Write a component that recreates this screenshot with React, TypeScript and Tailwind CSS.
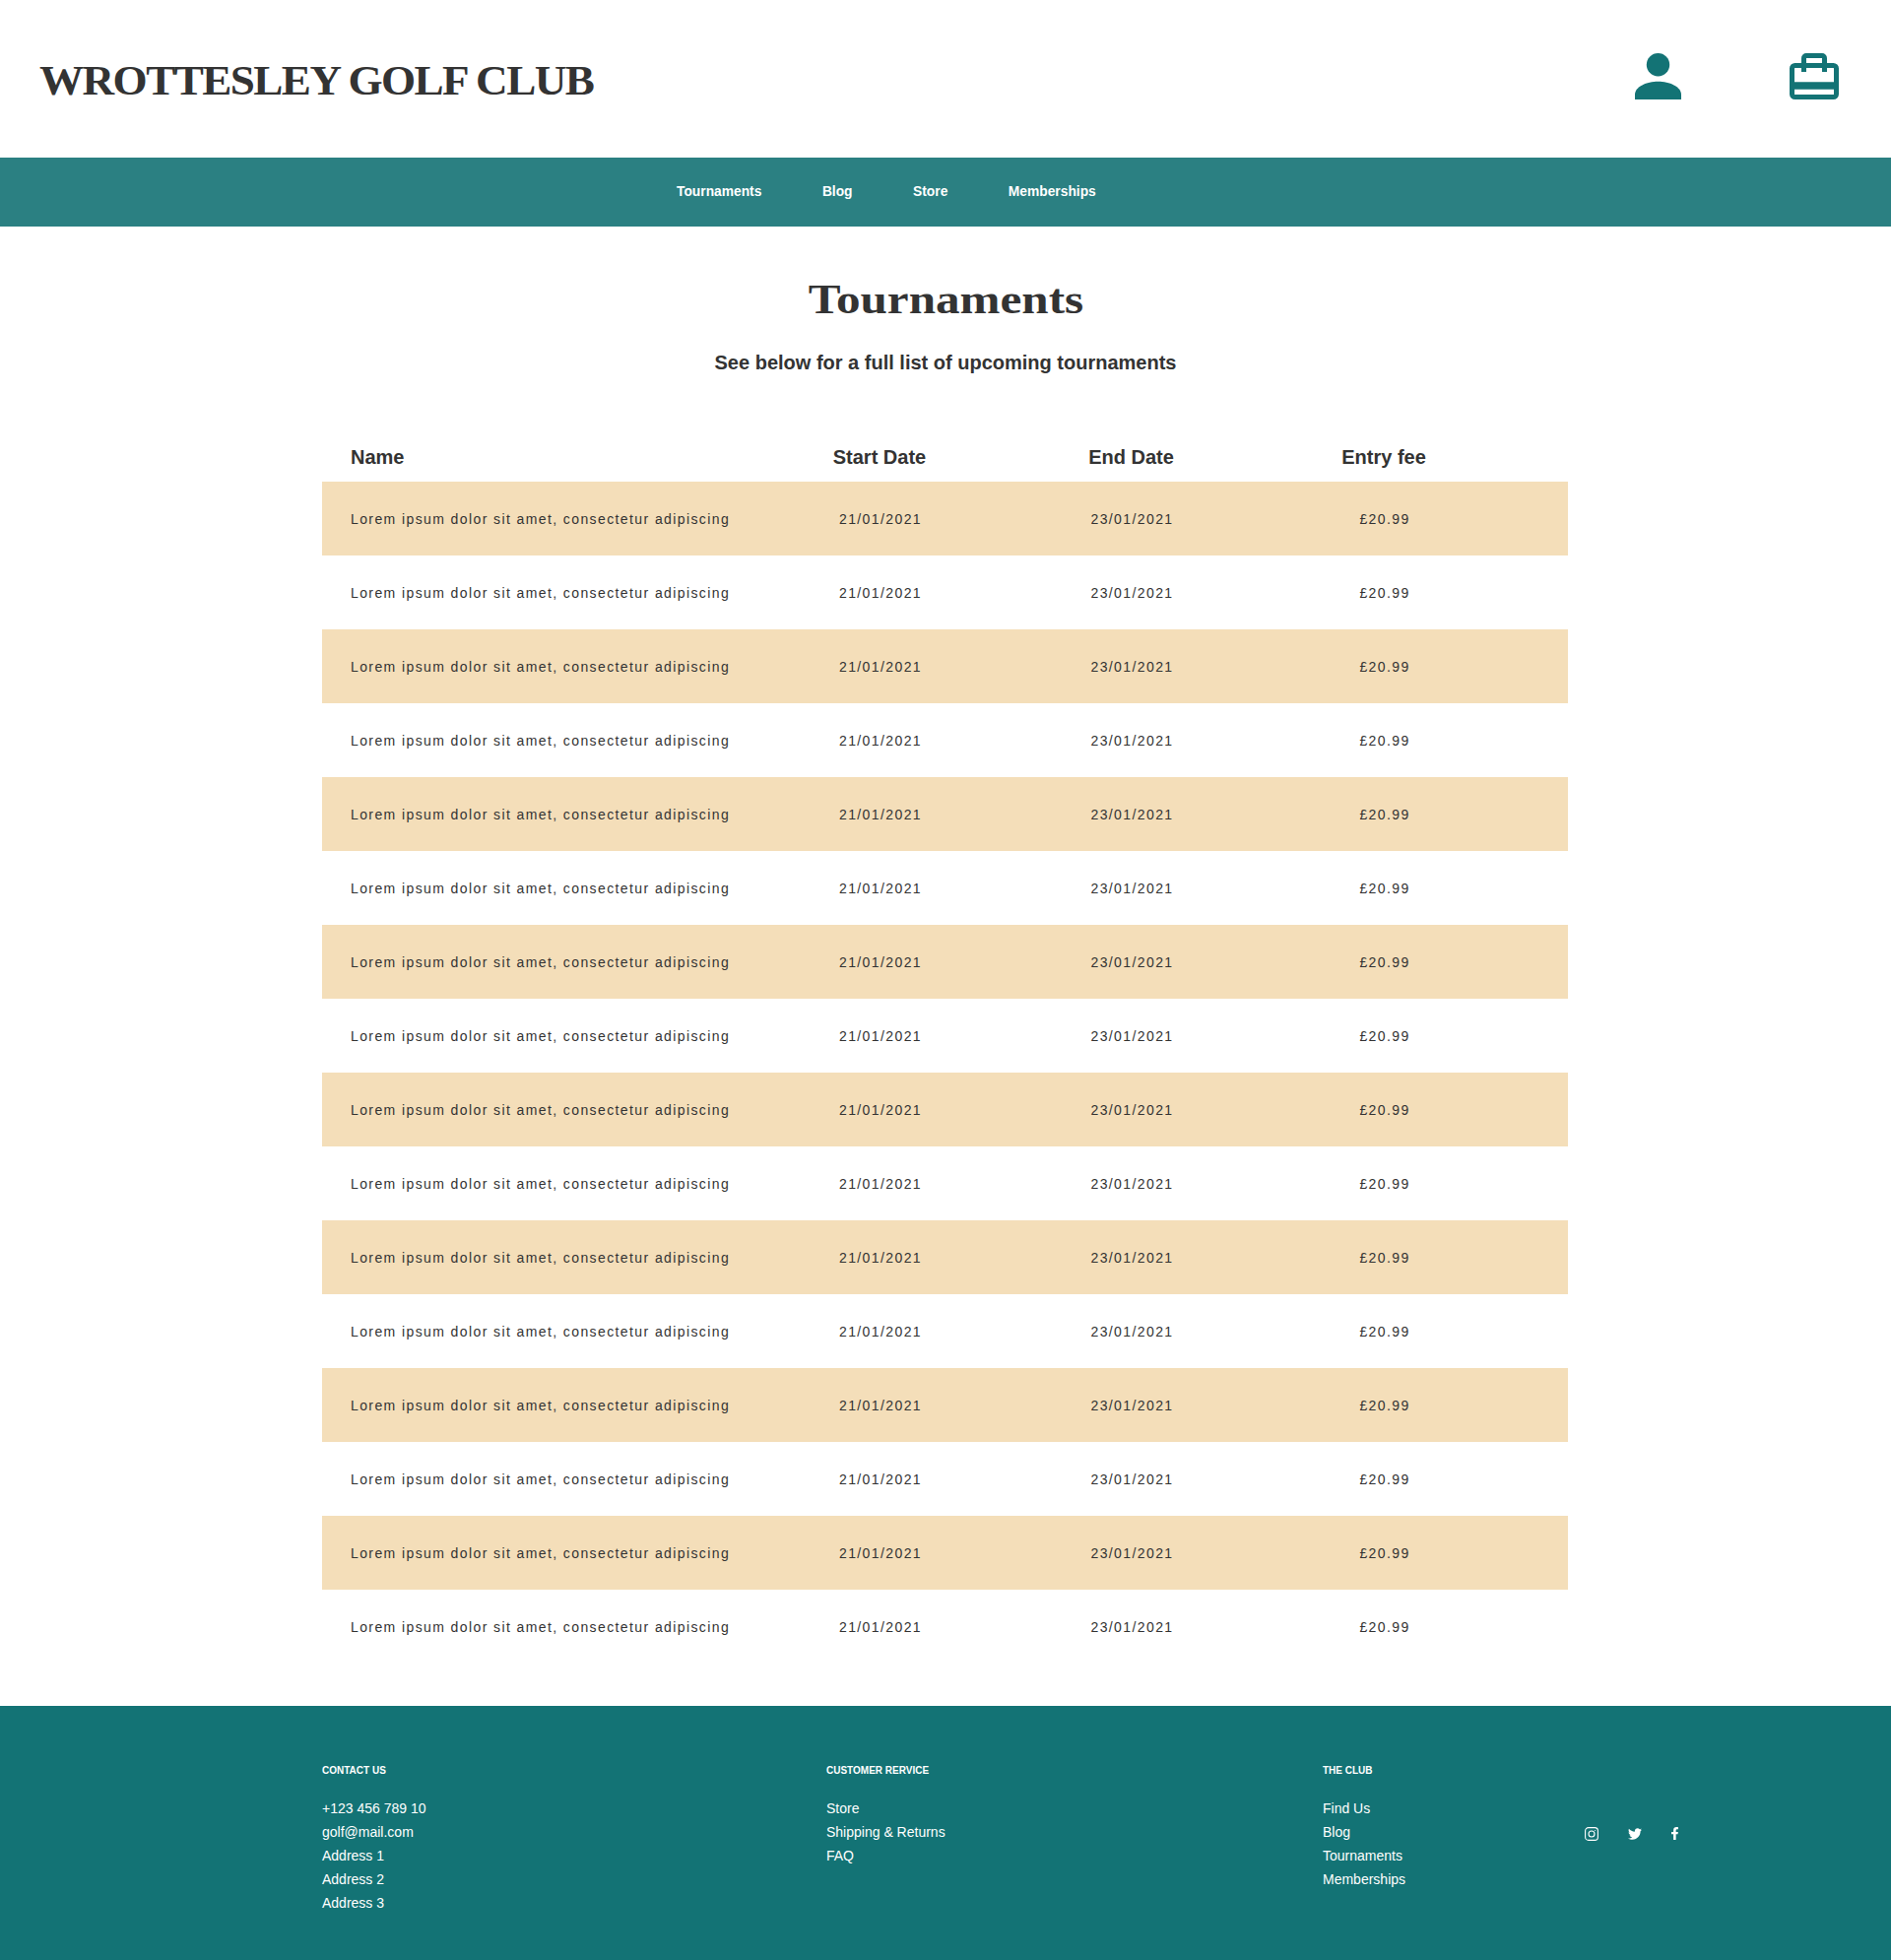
import React from "react";
import { FaTwitter, FaFacebookF } from "react-icons/fa";

const sans = "font-['Liberation_Sans',Arial,sans-serif]";
const rows = Array.from({ length: 16 }, (_, i) => i);

function PersonIcon() {
  return (
    <svg width="47" height="47" viewBox="0 0 47 47" fill="#137375">
      <circle cx="23.500" cy="11.700" r="11.700" />
      <path d="M0 47v-5C0 34 12 28.700 23.500 28.700S47 34 47 42v5z" />
    </svg>
  );
}

function CaseIcon() {
  return (
    <svg width="50" height="47" viewBox="0 0 50 47" fill="none" stroke="#137375" strokeWidth="5">
      <rect x="2.500" y="12.500" width="45" height="32" rx="3" />
      <path d="M14.500 19V5a2.500 2.500 0 0 1 2.500-2.500h16a2.500 2.500 0 0 1 2.500 2.500v14" />
      <path d="M2 33h46" strokeWidth="7.500" />
    </svg>
  );
}

function InstaIcon() {
  return (
    <svg width="14" height="14" viewBox="0 0 14 14" fill="none" stroke="#fff" strokeWidth="1.100">
      <rect x="0.600" y="0.600" width="12.800" height="12.800" rx="3.200" />
      <circle cx="7" cy="7" r="3" />
      <circle cx="10.600" cy="3.400" r="0.500" fill="#fff" stroke="none" />
    </svg>
  );
}

function Row({ striped }: { striped: boolean }) {
  return (
    <div className={`grid h-[75px] grid-cols-[439px_256px_255px_258px_57px] items-center pt-[2px] text-[14px] tracking-[1.4px] text-[#333333] ${striped ? "bg-[#f4deb9]" : "bg-white"}`}>
      <div className="pl-[29px]">Lorem ipsum dolor sit amet, consectetur adipiscing</div>
      <div className="text-center">21/01/2021</div>
      <div className="text-center">23/01/2021</div>
      <div className="text-center">£20.99</div>
      <div />
    </div>
  );
}

function FooterCol({ title, items }: { title: string; items: string[] }) {
  return (
    <div>
      <div className="mb-[18px] text-[10px] leading-[16px] font-bold text-white">{title}</div>
      <ul className="text-[14px] leading-[24px] text-white">
        {items.map((t) => (
          <li key={t}>{t}</li>
        ))}
      </ul>
    </div>
  );
}

export default function App() {
  return (
    <div className={`min-h-[1990px] overflow-hidden bg-white ${sans}`}>
      <header className="flex h-[160px] items-center justify-between pr-[53px] pl-[40px]">
        <div className="mt-[4px] origin-left scale-x-[1.05] font-['Liberation_Serif',serif] text-[43px] font-bold tracking-[-1.5px] text-[#333333]">WROTTESLEY GOLF CLUB</div>
        <div className="mb-[5px] flex items-center gap-[110px]">
          <PersonIcon />
          <CaseIcon />
        </div>
      </header>
      <nav className="flex h-[70px] items-center gap-[61.500px] bg-[#2b8082] pl-[687px] text-[13.800px] font-bold text-white">
        <span>Tournaments</span>
        <span>Blog</span>
        <span>Store</span>
        <span>Memberships</span>
      </nav>
      <main className="pt-[49px]">
        <h1 className="mx-auto w-fit scale-x-[1.17] font-['Liberation_Serif',serif] text-[42px] leading-[50px] font-bold text-[#333333]">Tournaments</h1>
        <p className="mt-[27px] text-center text-[20px] leading-[24px] font-bold text-[#333333]">See below for a full list of upcoming tournaments</p>
        <div className="mt-[58px] ml-[327px] w-[1265px]">
          <div className="grid h-[51px] grid-cols-[438px_256px_255px_258px_58px] items-center text-[20px] font-bold text-[#333333]">
            <div className="pl-[29px]">Name</div>
            <div className="text-center">Start Date</div>
            <div className="text-center">End Date</div>
            <div className="text-center">Entry fee</div>
            <div />
          </div>
          {rows.map((i) => (
            <Row key={i} striped={i % 2 === 0} />
          ))}
        </div>
      </main>
      <footer className="mt-[43px] grid h-[258px] grid-cols-[512px_504px_265px_auto] bg-[#137375] pt-[58px] pl-[327px]">
        <FooterCol title="CONTACT US" items={["+123 456 789 10", "golf@mail.com", "Address 1", "Address 2", "Address 3"]} />
        <FooterCol title="CUSTOMER RERVICE" items={["Store", "Shipping & Returns", "FAQ"]} />
        <FooterCol title="THE CLUB" items={["Find Us", "Blog", "Tournaments", "Memberships"]} />
        <div className="flex items-start pt-[65px] pl-[1px] text-white">
          <InstaIcon />
          <FaTwitter size={14} className="ml-[30px]" />
          <FaFacebookF size={13} className="ml-[27px]" />
        </div>
      </footer>
    </div>
  );
}
